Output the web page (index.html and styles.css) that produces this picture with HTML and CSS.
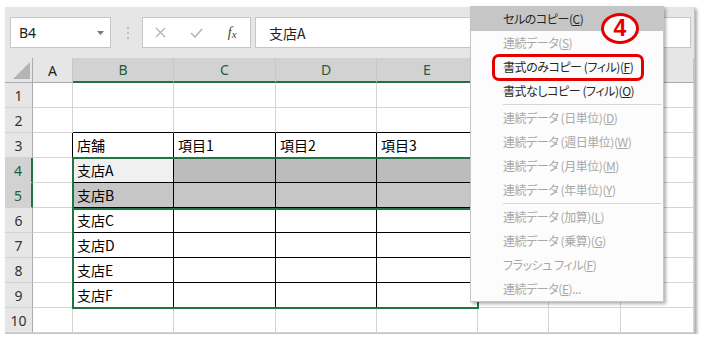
FILE: index.html
```html
<!DOCTYPE html>
<html lang="ja">
<head>
    <meta charset="UTF-8">
    <title>フィル メニュー</title>
    <link rel="stylesheet" href="styles.css">
</head>
<body>
    <div class="window">
        <!-- Formula bar -->
        <div class="fbar">
            <div class="namebox">
                <span>B4</span>
                <svg width="7" height="4" viewBox="0 0 7 4"><polygon points="0,0 7,0 3.5,4" fill="#777"/></svg>
            </div>
            <div class="grip"><i></i><i></i><i></i></div>
            <div class="fx-buttons">
                <span class="fx-btn">
                    <svg width="11" height="11" viewBox="0 0 11 11"><path d="M1 1L10 10M10 1L1 10" stroke="#b3b3b3" stroke-width="1.3" fill="none"/></svg>
                </span>
                <span class="fx-btn">
                    <svg width="13" height="10" viewBox="0 0 13 10"><path d="M1 5L5 9L12 1" stroke="#b3b3b3" stroke-width="1.5" fill="none"/></svg>
                </span>
                <span class="fx-btn fx-label"><i>f</i><i class="small">x</i></span>
            </div>
            <div class="formula">支店A</div>
        </div>

        <!-- Sheet -->
        <div class="grid">
            <div class="corner"><svg width="17" height="17" viewBox="0 0 17 17"><polygon points="17,0 17,17 0,17" fill="#b4b4b4"/></svg></div>
            <div class="ch">A</div>
            <div class="ch sel">B</div>
            <div class="ch sel">C</div>
            <div class="ch sel">D</div>
            <div class="ch sel">E</div>
            <div class="ch">F</div>
            <div class="ch">G</div>
            <div class="ch">H</div>

            <div class="rh">1</div>
            <div class="c"></div><div class="c"></div><div class="c"></div><div class="c"></div>
            <div class="c"></div><div class="c"></div><div class="c"></div><div class="c"></div>

            <div class="rh">2</div>
            <div class="c"></div>
            <div class="c edge-b"></div><div class="c edge-b"></div><div class="c edge-b"></div><div class="c edge-b"></div>
            <div class="c"></div><div class="c"></div><div class="c"></div>

            <div class="rh">3</div>
            <div class="c edge-r"></div>
            <div class="c tb">店舗</div><div class="c tb">項目1</div><div class="c tb">項目2</div><div class="c tb">項目3</div>
            <div class="c"></div><div class="c"></div><div class="c"></div>

            <div class="rh sel">4</div>
            <div class="c edge-r"></div>
            <div class="c tb act">支店A</div><div class="c tb g1"></div><div class="c tb g1"></div><div class="c tb g1"></div>
            <div class="c"></div><div class="c"></div><div class="c"></div>

            <div class="rh sel">5</div>
            <div class="c edge-r"></div>
            <div class="c tb g2">支店B</div><div class="c tb g2"></div><div class="c tb g2"></div><div class="c tb g2"></div>
            <div class="c"></div><div class="c"></div><div class="c"></div>

            <div class="rh">6</div>
            <div class="c edge-r"></div>
            <div class="c tb">支店C</div><div class="c tb"></div><div class="c tb"></div><div class="c tb"></div>
            <div class="c"></div><div class="c"></div><div class="c"></div>

            <div class="rh">7</div>
            <div class="c edge-r"></div>
            <div class="c tb">支店D</div><div class="c tb"></div><div class="c tb"></div><div class="c tb"></div>
            <div class="c"></div><div class="c"></div><div class="c"></div>

            <div class="rh">8</div>
            <div class="c edge-r"></div>
            <div class="c tb">支店E</div><div class="c tb"></div><div class="c tb"></div><div class="c tb"></div>
            <div class="c"></div><div class="c"></div><div class="c"></div>

            <div class="rh">9</div>
            <div class="c edge-r"></div>
            <div class="c tb">支店F</div><div class="c tb"></div><div class="c tb"></div><div class="c tb"></div>
            <div class="c"></div><div class="c"></div><div class="c"></div>

            <div class="rh">10</div>
            <div class="c"></div><div class="c"></div><div class="c"></div><div class="c"></div>
            <div class="c"></div><div class="c"></div><div class="c"></div><div class="c"></div>

            <!-- selection outlines -->
            <div class="sel-fill"></div>
            <div class="sel-copy"></div>
        </div>

        <!-- Fill menu -->
        <div class="menu">
            <div class="item hot">セルのコピー(<u>C</u>)</div>
            <div class="item off">連続データ(<u>S</u>)</div>
            <div class="item">書式のみコピー (フィル)(<u>F</u>)</div>
            <div class="item">書式なしコピー (フィル)(<u>O</u>)</div>
            <div class="sep"></div>
            <div class="item off">連続データ (日単位)(<u>D</u>)</div>
            <div class="item off">連続データ (週日単位)(<u>W</u>)</div>
            <div class="item off">連続データ (月単位)(<u>M</u>)</div>
            <div class="item off">連続データ (年単位)(<u>Y</u>)</div>
            <div class="sep"></div>
            <div class="item off">連続データ (加算)(<u>L</u>)</div>
            <div class="item off">連続データ (乗算)(<u>G</u>)</div>
            <div class="item off">フラッシュ フィル(<u>F</u>)</div>
            <div class="item off">連続データ(<u>E</u>)...</div>

            <div class="mark"></div>
            <div class="badge">4</div>
        </div>
    </div>
</body>
</html>
```

FILE: styles.css
```css
* {
    box-sizing: border-box;
}

body {
    margin: 0;
    background: #fff;
    font-family: "Noto Sans CJK JP", sans-serif;
}

/* Excel window */
.window {
    position: relative;
    margin: 7px 0 0 5px;
    width: 690px;
    background: #fff;
    border-right: 1px solid #c4c4c4;
    border-bottom: 1px solid #c4c4c4;
    box-shadow: 2px 2px 3px rgba(0, 0, 0, 0.35);
}

/* Formula bar */
.fbar {
    height: 51px;
    background: #e6e6e6;
    display: flex;
    align-items: center;
    padding-left: 5px;
}

.namebox {
    width: 101px;
    height: 31px;
    border: 1px solid #c6c6c6;
    background: #fff;
    display: flex;
    align-items: center;
    justify-content: space-between;
    padding: 0 6px 0 8px;
    font: 14px "Noto Sans", sans-serif;
    color: #222;
}

.grip {
    display: flex;
    flex-direction: column;
    gap: 3px;
    margin: 0 13px 0 16px;
}

.grip i {
    display: block;
    width: 2px;
    height: 2px;
    background: #bdbdbd;
}

.fx-buttons {
    width: 109px;
    height: 31px;
    border: 1px solid #c6c6c6;
    background: #fff;
    display: flex;
    align-items: center;
}

.fx-btn {
    width: 36px;
    display: flex;
    justify-content: center;
    align-items: center;
}

.fx-label {
    font: italic 14px "Liberation Serif", serif;
    color: #444;
}

.fx-label .small {
    font-size: 11px;
    margin-top: 3px;
}

.formula {
    flex: 1;
    height: 31px;
    margin: 0 3px 0 4px;
    border: 1px solid #c6c6c6;
    background: #fff;
    padding-left: 13px;
    display: flex;
    align-items: center;
    font-size: 14px;
    color: #222;
}

/* Sheet grid */
.grid {
    position: relative;
    display: grid;
    grid-template-columns: 28px 40px 101px 102px 101px 101px 71px 72px 1fr;
    grid-template-rows: repeat(11, 25px);
}

.corner {
    background: #e6e6e6;
    border-right: 1px solid #ababab;
    border-bottom: 1px solid #ababab;
    display: flex;
    align-items: flex-end;
    justify-content: flex-end;
    padding: 0 2px 3px 0;
}

.ch {
    background: #e6e6e6;
    border-right: 1px solid #c6c6c6;
    border-bottom: 1px solid #ababab;
    display: flex;
    align-items: center;
    justify-content: center;
    font: 14px "Noto Sans", sans-serif;
    color: #222;
}

.ch.sel {
    background: #d2d2d2;
    color: #1d5e3b;
    border-bottom: 2px solid #217346;
}

.rh {
    background: #e6e6e6;
    border-right: 1px solid #ababab;
    border-bottom: 1px solid #d2d2d2;
    display: flex;
    align-items: center;
    justify-content: center;
    font: 14px "Noto Sans", sans-serif;
    color: #333;
}

.rh.sel {
    background: #d2d2d2;
    color: #1d5e3b;
    border-right: 2px solid #217346;
}

.c {
    border-right: 1px solid #d4d4d4;
    border-bottom: 1px solid #d4d4d4;
    padding-left: 4px;
    display: flex;
    align-items: center;
    font-size: 14px;
    color: #000;
}

.tb {
    border-color: #000;
}

.edge-r {
    border-right-color: #000;
}

.edge-b {
    border-bottom-color: #000;
}

.act {
    background: #f0f0f0;
}

.g1 {
    background: #bcbcbc;
}

.g2 {
    background: #c6c6c6;
}

/* Selection outlines */
.sel-fill {
    position: absolute;
    left: 67px;
    top: 99px;
    width: 407px;
    height: 152px;
    border: 2px solid #217346;
}

.sel-copy {
    position: absolute;
    left: 67px;
    top: 99px;
    width: 407px;
    height: 53px;
    border: 2px solid #217346;
}

/* Fill dropdown menu */
.menu {
    position: absolute;
    left: 465px;
    top: -1px;
    width: 194px;
    background: #fcfcfc;
    border: 1px solid #c6c6c6;
    box-shadow: 2px 2px 3px rgba(0, 0, 0, 0.3);
    font-size: 12px;
    letter-spacing: -0.45px;
    font-feature-settings: "palt";
}

.item {
    height: 24px;
    line-height: 24px;
    padding-left: 32px;
    color: #262626;
    white-space: nowrap;
}

.item.hot {
    background: #c6c6c6;
}

.item.off {
    color: #a8a8a8;
}

.sep {
    height: 1px;
    background: #d7d7d7;
    margin: 1px 1px 1px 32px;
}

/* Annotations */
.mark {
    position: absolute;
    left: 21px;
    top: 47px;
    width: 152px;
    height: 27px;
    border: 3px solid #e50000;
    border-radius: 7px;
}

.badge {
    position: absolute;
    left: 130px;
    top: 6px;
    width: 38px;
    height: 31px;
    border: 3px solid #e50000;
    border-radius: 50%;
    background: #fff;
    color: #e50000;
    font: bold 23px "Liberation Sans", sans-serif;
    letter-spacing: 0;
    display: flex;
    align-items: center;
    justify-content: center;
}
```
